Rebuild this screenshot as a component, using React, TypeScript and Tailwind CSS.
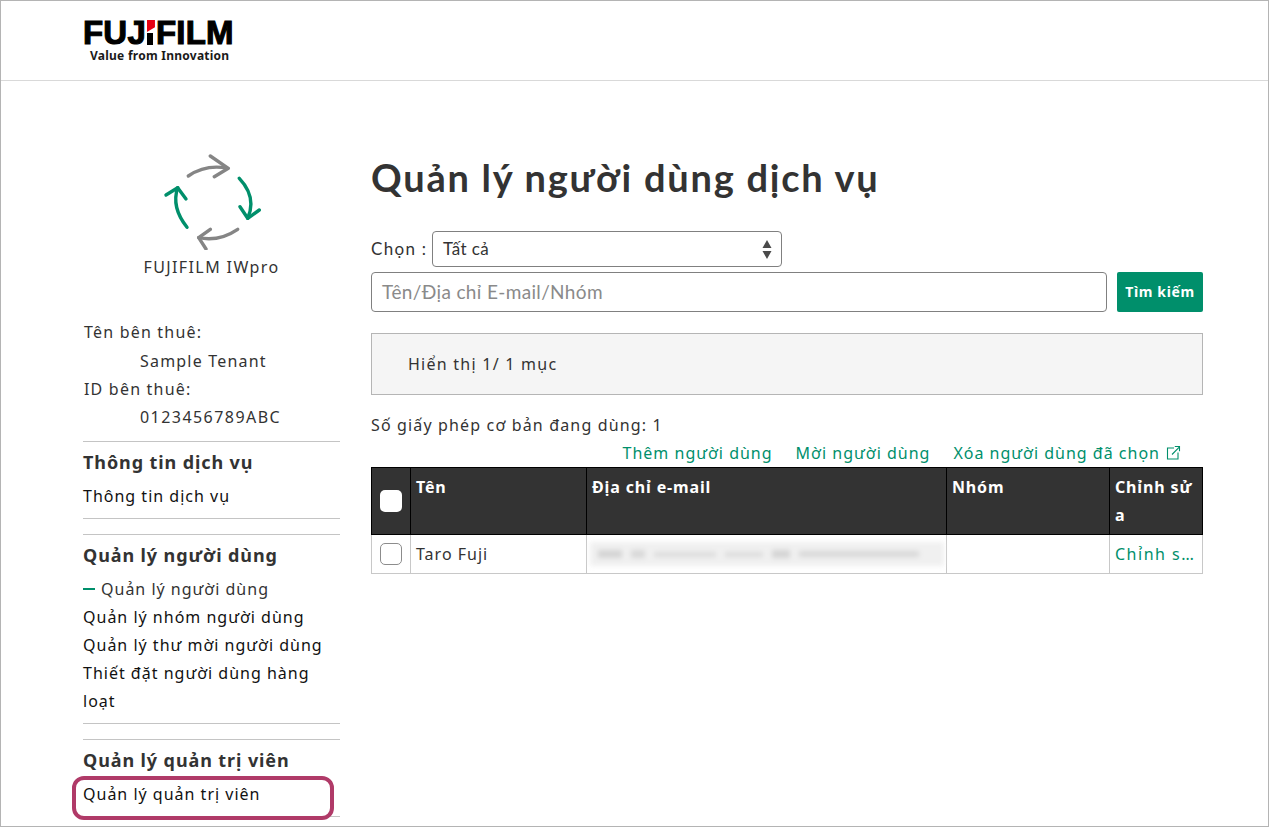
const sans = "font-['Noto_Sans','Open_Sans',sans-serif]";

function Rule() {
  return <div className="h-px bg-[#c4c4c4]" />;
}

function Heading({ children }: { children: React.ReactNode }) {
  return <div className="text-[18px] leading-[28px] font-bold tracking-[0.9px] text-[#333333]">{children}</div>;
}

function Item({ children }: { children: React.ReactNode }) {
  return <div className="text-[16px] leading-[28px] tracking-[1px] text-[#111111]">{children}</div>;
}

function CycleIcon() {
  return (
    <svg width="100" height="96" viewBox="160 154 100 96" fill="none" strokeWidth="3.4" strokeLinecap="round" strokeLinejoin="round">
      <path d="M187.3 176 Q205 164 226.7 168.3" stroke="#858585" />
      <path d="M209.3 156 L227.3 168.3 L213.3 176.7" stroke="#858585" />
      <path d="M238.3 178.3 Q256 197 246.7 218.3" stroke="#008f6b" />
      <path d="M239 206.7 L246.7 218.3 L258.3 210" stroke="#008f6b" />
      <path d="M236.7 229.3 Q218 242 197.7 237.7" stroke="#858585" />
      <path d="M209.3 229.3 L197.7 237.7 L205 249" stroke="#858585" />
      <path d="M186 227.3 Q170 207 176.7 187.7" stroke="#008f6b" />
      <path d="M165 195 L176.7 187.7 L185 199" stroke="#008f6b" />
    </svg>
  );
}

function ExternalIcon() {
  return (
    <svg width="16" height="16" viewBox="0 0 16 16" fill="none" stroke="#008f6b" strokeWidth="1.1" className="inline-block">
      <path d="M9 3 H2.5 V14 H13 V7.5" />
      <path d="M7 9.5 L14.5 1.8 M9.8 1.5 H14.5 V6.2" />
    </svg>
  );
}

function Logo() {
  return (
    <div className="flex flex-col items-start">
      <div className="flex h-[27px] items-center font-['Liberation_Sans',sans-serif] text-[33px] leading-[27px] font-bold tracking-[0.2px] text-black [-webkit-text-stroke:1.1px_#000]">
        <span>FUJ</span>
        <span className="relative mx-[1px] inline-flex h-[25px] w-[8px] flex-col justify-between">
          <span className="h-[12px] w-[8px] bg-[#e60012] [clip-path:polygon(0_0,100%_0,100%_60%,0_100%)]" />
          <span className="h-[12px] w-[6px] bg-black" />
        </span>
        <span>FILM</span>
      </div>
      <div className="mt-[3px] pl-[7px] text-[12px] leading-[14px] font-bold tracking-[0.25px] text-[#1a1a1a]">Value from Innovation</div>
    </div>
  );
}

function Sidebar() {
  return (
    <aside className="w-[257px] shrink-0 pt-[73px]">
      <div className="flex flex-col items-center pr-[2px]">
        <CycleIcon />
        <div className="mt-[3px] pl-[2px] text-[16px] leading-[28px] tracking-[1.4px] text-[#333333]">FUJIFILM IWpro</div>
      </div>
      <div className="mt-[37px] pl-[1px] text-[16px] leading-[28px] tracking-[1.2px] text-[#333333]">
        <div>Tên bên thuê:</div>
        <div className="mt-[1px] pl-[56px]">Sample Tenant</div>
        <div>ID bên thuê:</div>
        <div className="pl-[56px] tracking-[1.45px]">0123456789ABC</div>
      </div>
      <div className="mt-[10px]"><Rule /></div>
      <div className="pt-[6px] pb-[8px]">
        <Heading>Thông tin dịch vụ</Heading>
        <div className="mt-[6px]"><Item>Thông tin dịch vụ</Item></div>
      </div>
      <Rule />
      <div className="mt-[15px]"><Rule /></div>
      <div className="pt-[6px] pb-[8px]">
        <Heading>Quản lý người dùng</Heading>
        <div className="mt-[6px]">
          <div className="flex items-center text-[16px] leading-[28px] tracking-[1px] text-[#333333]">
            <span className="mr-[6px] h-[2px] w-[12px] bg-[#008f6b]" />
            Quản lý người dùng
          </div>
          <Item>Quản lý nhóm người dùng</Item>
          <Item>Quản lý thư mời người dùng</Item>
          <Item>Thiết đặt người dùng hàng loạt</Item>
        </div>
      </div>
      <Rule />
      <div className="mt-[15px]"><Rule /></div>
      <div className="pt-[6px] pb-[8px]">
        <Heading>Quản lý quản trị viên</Heading>
        <div className="mt-[6px]"><Item>Quản lý quản trị viên</Item></div>
      </div>
      <Rule />
    </aside>
  );
}

function Main() {
  return (
    <main className="ml-[31px] w-[832px] shrink-0">
      <h1 className="mt-[68px] font-['Lato',sans-serif] text-[38px] leading-[56px] font-bold tracking-[1.75px] text-[#333333]">
        Quản lý người dùng dịch vụ
      </h1>
      <div className="mt-[26px] flex h-[36px] items-center font-['Lato',sans-serif]">
        <span className="w-[61px] text-[17px] tracking-[1.3px] text-[#333333]">Chọn :</span>
        <div className="flex h-[36px] w-[350px] items-center justify-between rounded-[4px] border border-[#808080] pr-[9px] pl-[10px] text-[17px] tracking-[0.4px] text-[#333333]">
          <span>Tất cả</span>
          <svg width="10" height="21" viewBox="0 0 10 21" fill="#4a4a4a">
            <path d="M5 1 L9.5 9 H0.5 Z M0.5 12 H9.5 L5 20 Z" />
          </svg>
        </div>
      </div>
      <div className="mt-[5px] flex h-[40px] gap-[10px]">
        <div className="flex w-[736px] items-center rounded-[4px] border border-[#808080] pl-[10px] font-['Lato',sans-serif] text-[19px] tracking-[0.35px] text-[#8a8a8a]">
          Tên/Địa chỉ E-mail/Nhóm
        </div>
        <button className="h-[40px] w-[86px] rounded-[2px] bg-[#008f6b] pb-[2px] text-[14px] font-bold tracking-[0.65px] text-white">Tìm kiếm</button>
      </div>
      <div className="mt-[21px] flex h-[62px] items-center border border-[#b5b5b5] bg-[#f5f5f5] pl-[36px] text-[16px] tracking-[1.25px] text-[#333333]">
        Hiển thị 1/ 1 mục
      </div>
      <div className="mt-[16px] text-[16px] leading-[28px] tracking-[1.15px] text-[#333333]">Số giấy phép cơ bản đang dùng: 1</div>
      <div className="flex h-[28px] items-center justify-end gap-[23px] pr-[22px] text-[16px] tracking-[1px] text-[#008f6b]">
        <span>Thêm người dùng</span>
        <span>Mời người dùng</span>
        <span className="flex items-center gap-[5px]">Xóa người dùng đã chọn <ExternalIcon /></span>
      </div>
      <table className="w-[831px] table-fixed border-collapse text-[16px] leading-[28px] tracking-[0.85px]">
        <colgroup>
          <col className="w-[39px]" />
          <col className="w-[176px]" />
          <col className="w-[360px]" />
          <col className="w-[163px]" />
          <col className="w-[93px]" />
        </colgroup>
        <thead>
          <tr className="h-[66px] bg-[#333333] text-left font-bold text-white">
            <th className="border border-black p-0">
              <div className="mx-auto h-[22px] w-[22px] rounded-[5px] bg-white" />
            </th>
            <th className="border border-black px-[5px] pt-[5px] pb-[5px] align-top">Tên</th>
            <th className="border border-black px-[5px] pt-[5px] pb-[5px] align-top">Địa chỉ e-mail</th>
            <th className="border border-black px-[5px] pt-[5px] pb-[5px] align-top">Nhóm</th>
            <th className="border border-black px-[5px] pt-[5px] pb-[5px] align-top break-all">Chỉnh sửa</th>
          </tr>
        </thead>
        <tbody>
          <tr className="h-[39px] text-[#333333]">
            <td className="border border-[#c8c8c8] p-0">
              <div className="mx-auto h-[22px] w-[22px] rounded-[5px] border border-[#8c8c8c] bg-white" />
            </td>
            <td className="border border-[#c8c8c8] px-[5px] py-0 tracking-[1px]">Taro Fuji</td>
            <td className="border border-[#c8c8c8] px-[3px] py-0">
              <div className="flex h-[24px] w-[354px] items-center gap-[9px] overflow-hidden bg-[#f0f0f0] pl-[8px] blur-[2.5px]">
                <span className="h-[8px] w-[24px] bg-[#d4d4d4]" />
                <span className="h-[8px] w-[14px] bg-[#d8d8d8]" />
                <span className="h-[5px] w-[62px] bg-[#dcdcdc]" />
                <span className="h-[5px] w-[38px] bg-[#dcdcdc]" />
                <span className="h-[8px] w-[18px] bg-[#d4d4d4]" />
                <span className="h-[6px] w-[120px] bg-[#d8d8d8]" />
              </div>
            </td>
            <td className="border border-[#c8c8c8] p-0" />
            <td className="truncate border border-[#c8c8c8] py-0 pr-[3px] pl-[5px] tracking-[1.5px] text-[#008f6b]">Chỉnh sửa</td>
          </tr>
        </tbody>
      </table>
    </main>
  );
}

export default function App() {
  return (
    <div className={`relative h-[827px] w-[1269px] overflow-hidden border border-[#b4b4b4] bg-white ${sans}`}>
      <header className="flex h-[80px] items-start border-b border-[#d9d9d9] pt-[18px] pl-[82px]">
        <Logo />
      </header>
      <div className="flex pl-[82px]">
        <Sidebar />
        <Main />
      </div>
      <div className="absolute top-[775px] left-[71px] h-[44px] w-[262px] rounded-[12px] border-[4.5px] border-[#b03a68]" />
    </div>
  );
}
